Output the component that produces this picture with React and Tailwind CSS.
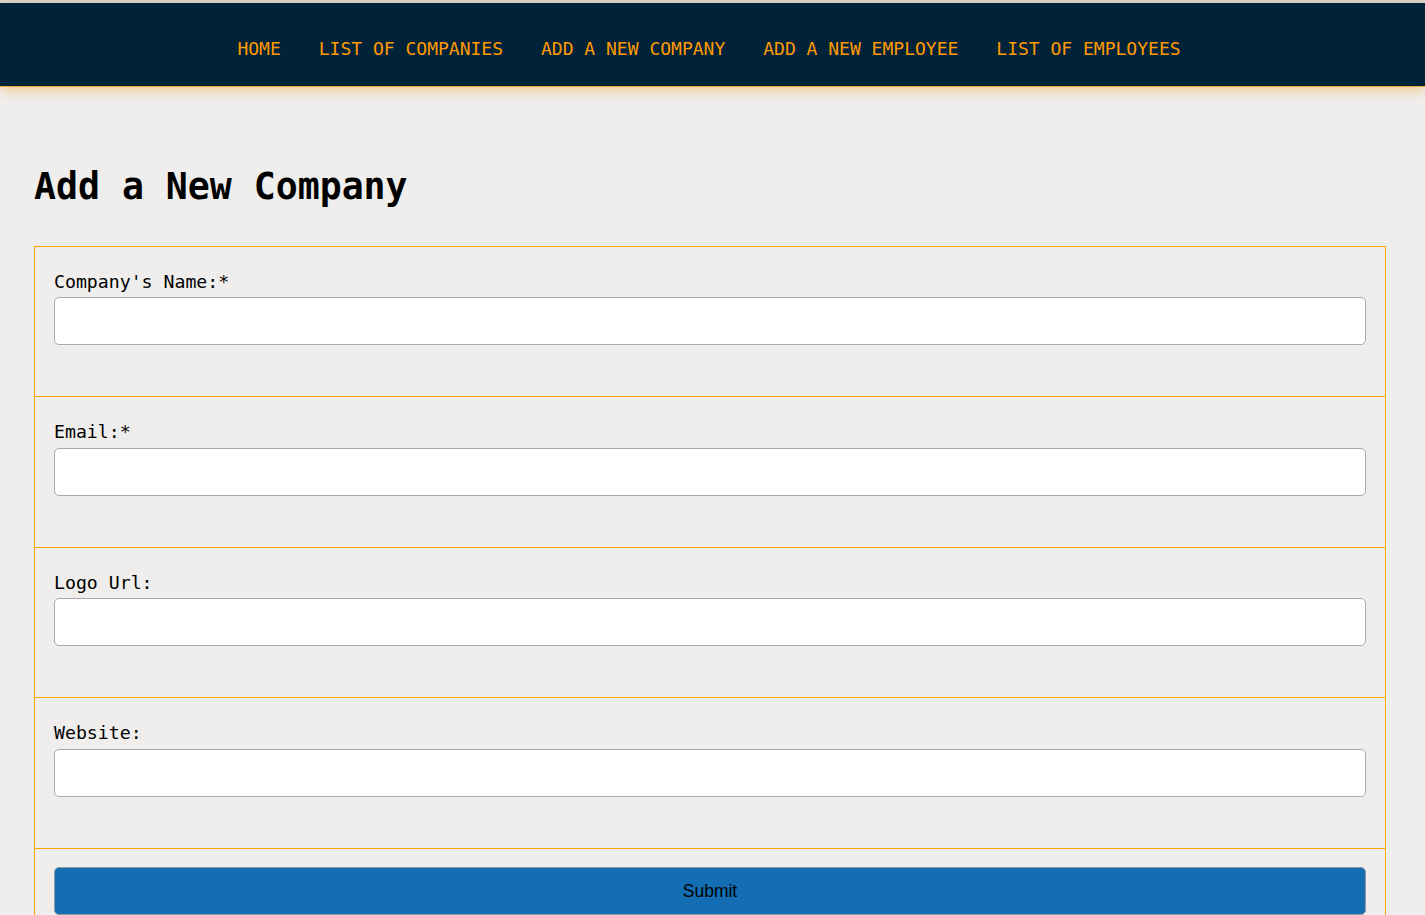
import React from "react";

const mono = { fontFamily: '"DejaVu Sans Mono", monospace' };

function Field({ label, mt }) {
  return (
    <div className="border-b border-b-[#ffa500] px-[19px] pt-[23px] pb-[51px]">
      <label className="block text-[18.2px] leading-[24px] text-black">{label}</label>
      <input
        type="text"
        className={`${mt} block h-[48px] w-full rounded-[5px] border border-[#a9a9a9] bg-white px-2 outline-none`}
      />
    </div>
  );
}

export default function App() {
  const links = [
    "HOME",
    "LIST OF COMPANIES",
    "ADD A NEW COMPANY",
    "ADD A NEW EMPLOYEE",
    "LIST OF EMPLOYEES",
  ];
  return (
    <div className="min-h-screen bg-[#efeeec]" style={mono}>
      <div className="h-[3px] bg-[#d4d4d4]" />
      <nav className="relative z-10 flex h-[84px] items-center justify-center gap-[38px] border-b border-b-[#e9a93a] bg-[#00233a] pt-[8px] pr-[7px] shadow-[0_3px_12px_rgba(255,170,60,0.55)]">
        {links.map((l) => (
          <a key={l} href="#" className="text-[18px] leading-[24px] text-[#ff9a00] no-underline">
            {l}
          </a>
        ))}
      </nav>
      <main className="pl-[34px]">
        <h1 className="mt-[79px] text-[36.5px] font-bold leading-[42px] text-black">Add a New Company</h1>
        <form className="mt-[38px] w-[1352px] border-x border-t border-x-[#ffa500] border-t-[#ffa500]">
          <Field label="Company's Name:*" mt="mt-[3px]" />
          <Field label="Email:*" mt="mt-[4px]" />
          <Field label="Logo Url:" mt="mt-[3px]" />
          <Field label="Website:" mt="mt-[4px]" />
          <div className="px-[19px] pt-[18px] pb-[20px]">
            <button
              type="button"
              className="block h-[48px] w-full rounded-[5px] border border-[#8f9aa5] bg-[#136eb4] text-[17.5px] text-black"
              style={{ fontFamily: '"Liberation Sans", Arial, sans-serif' }}
            >
              Submit
            </button>
          </div>
        </form>
      </main>
    </div>
  );
}
